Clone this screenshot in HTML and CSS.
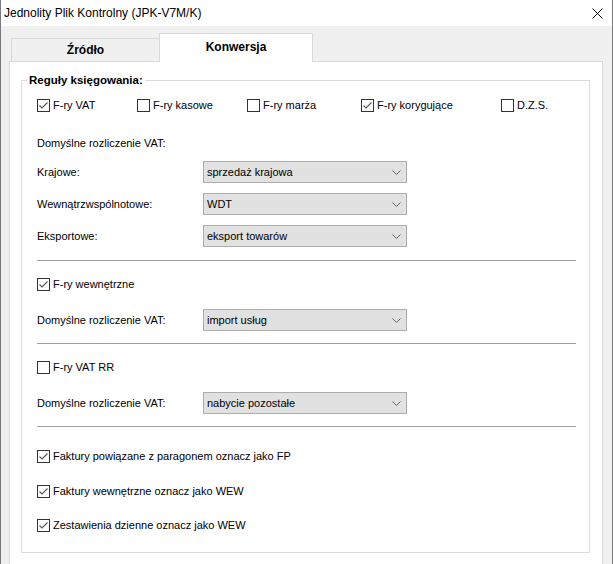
FILE: index.html
```html
<!DOCTYPE html>
<html lang="pl">
<head>
    <meta charset="UTF-8">
    <title>Jednolity Plik Kontrolny (JPK-V7M/K)</title>
    <link rel="stylesheet" href="styles.css">
</head>
<body>
    <div class="window">
        <div class="titlebar">
            <span class="title">Jednolity Plik Kontrolny (JPK-V7M/K)</span>
            <svg class="close" width="11" height="11" viewBox="0 0 11 11">
                <path d="M0.5 0.5 L10.5 10.5 M10.5 0.5 L0.5 10.5" stroke="#000" stroke-width="1" fill="none"/>
            </svg>
        </div>
        <div class="client">
            <div class="tabs">
                <div class="tab">Źródło</div>
                <div class="tab selected">Konwersja</div>
            </div>
            <div class="page">
                <fieldset class="group">
                    <legend>Reguły księgowania:</legend>
                    <div class="group-body">
                        <div class="types">
                            <div class="check"><span class="box on"></span>F-ry VAT</div>
                            <div class="check"><span class="box"></span>F-ry kasowe</div>
                            <div class="check"><span class="box"></span>F-ry marża</div>
                            <div class="check"><span class="box on"></span>F-ry korygujące</div>
                            <div class="check"><span class="box"></span>D.Z.S.</div>
                        </div>

                        <div class="caption">Domyślne rozliczenie VAT:</div>
                        <div class="field first">
                            <span class="field-label">Krajowe:</span>
                            <div class="combo">sprzedaż krajowa</div>
                        </div>
                        <div class="field">
                            <span class="field-label">Wewnątrzwspólnotowe:</span>
                            <div class="combo">WDT</div>
                        </div>
                        <div class="field">
                            <span class="field-label">Eksportowe:</span>
                            <div class="combo">eksport towarów</div>
                        </div>

                        <div class="sep wide"></div>
                        <div class="check row"><span class="box on"></span>F-ry wewnętrzne</div>
                        <div class="field after-check">
                            <span class="field-label">Domyślne rozliczenie VAT:</span>
                            <div class="combo">import usług</div>
                        </div>

                        <div class="sep"></div>
                        <div class="check row"><span class="box"></span>F-ry VAT RR</div>
                        <div class="field after-check">
                            <span class="field-label">Domyślne rozliczenie VAT:</span>
                            <div class="combo">nabycie pozostałe</div>
                        </div>

                        <div class="sep"></div>
                        <div class="check flag first-flag"><span class="box on"></span>Faktury powiązane z paragonem oznacz jako FP</div>
                        <div class="check flag"><span class="box on"></span>Faktury wewnętrzne oznacz jako WEW</div>
                        <div class="check flag last-flag"><span class="box on"></span>Zestawienia dzienne oznacz jako WEW</div>
                    </div>
                </fieldset>
            </div>
        </div>
    </div>
    <script>
        // check marks and combo arrows are the same everywhere, so add them here
        const tick = '<svg width="11" height="11" viewBox="0 0 11 11"><polyline points="1.5,5.5 4,8 9.5,2.5" fill="none" stroke="#555" stroke-width="1.1"/></svg>';
        document.querySelectorAll('.box.on').forEach(box => {
            box.innerHTML = tick;
        });

        const arrow = '<svg class="arrow" width="9" height="5" viewBox="0 0 9 5"><polyline points="0.5,0.5 4.5,4.5 8.5,0.5" fill="none" stroke="#606060" stroke-width="1"/></svg>';
        document.querySelectorAll('.combo').forEach(combo => {
            combo.insertAdjacentHTML('beforeend', arrow);
        });
    </script>
</body>
</html>
```

FILE: styles.css
```css
* {
    margin: 0;
    padding: 0;
    box-sizing: border-box;
}
body {
    width: 613px;
    height: 564px;
    overflow: hidden;
    font-family: "Liberation Sans", Arial, sans-serif;
    font-size: 11px;
    line-height: 13px;
    color: #000;
    background: #f0f0f0;
}
.window {
    display: flex;
    flex-direction: column;
    width: 613px;
    height: 564px;
    border-left: 1px solid #7a7a7a;
    border-right: 1px solid #7a7a7a;
    background: #f0f0f0;
}
.titlebar {
    height: 26px;
    flex-shrink: 0;
    display: flex;
    align-items: center;
    justify-content: space-between;
    padding: 0 9px 0 3px;
    background: #fff;
}
.title {
    font-size: 12px;
    line-height: 16px;
}
.close {
    display: block;
}
.client {
    flex: 1;
    display: flex;
    flex-direction: column;
    padding: 7px 9px 0 8px;
}
.tabs {
    display: flex;
    align-items: flex-end;
    height: 28px;
    padding-left: 2px;
}
.tab {
    display: flex;
    align-items: center;
    justify-content: center;
    width: 148px;
    height: 23px;
    border: 1px solid #d9d9d9;
    border-bottom: none;
    border-right: none;
    background: #f0f0f0;
    font-size: 12px;
    font-weight: bold;
}
.tab.selected {
    position: relative;
    z-index: 1;
    width: 154px;
    height: 29px;
    margin-bottom: -1px;
    padding-bottom: 1px;
    border-right: 1px solid #d9d9d9;
    background: #fff;
}
.page {
    flex: 1;
    padding: 11px 12px 0 11px;
    background: #fff;
    border: 1px solid #d9d9d9;
    border-bottom: none;
}
.group {
    border: 1px solid #dcdcdc;
    min-width: 0;
}
.group legend {
    margin-left: 5px;
    padding: 0 2px;
    font-size: 11.5px;
    font-weight: bold;
    line-height: 14px;
}
.group-body {
    padding: 0 13px 20px 15px;
}
.types {
    display: grid;
    grid-template-columns: 100px 110px 114px 140px auto;
    margin-top: 12px;
}
.check {
    display: flex;
    align-items: center;
    height: 13px;
    white-space: nowrap;
}
.box {
    display: flex;
    align-items: center;
    justify-content: center;
    width: 13px;
    height: 13px;
    margin-right: 3px;
    flex-shrink: 0;
    border: 1px solid #333;
    background: #fff;
}
.caption {
    margin-top: 25px;
}
.field {
    display: flex;
    align-items: center;
    height: 22px;
    margin-top: 10px;
}
.field.first {
    margin-top: 11px;
}
.field.after-check {
    margin-top: 18px;
}
.field-label {
    width: 166px;
    flex-shrink: 0;
}
.combo {
    display: flex;
    align-items: center;
    justify-content: space-between;
    width: 204px;
    height: 22px;
    padding: 0 5px 0 3px;
    background: #e1e1e1;
    border: 1px solid #adadad;
}
.arrow {
    display: block;
}
.sep {
    height: 1px;
    margin-top: 12px;
    background: #a0a0a0;
}
.sep.wide {
    margin-top: 13px;
}
.check.row {
    margin-top: 17px;
}
.check.flag {
    margin-top: 22px;
}
.check.first-flag {
    margin-top: 23px;
}
.check.last-flag {
    margin-top: 21px;
}
```
